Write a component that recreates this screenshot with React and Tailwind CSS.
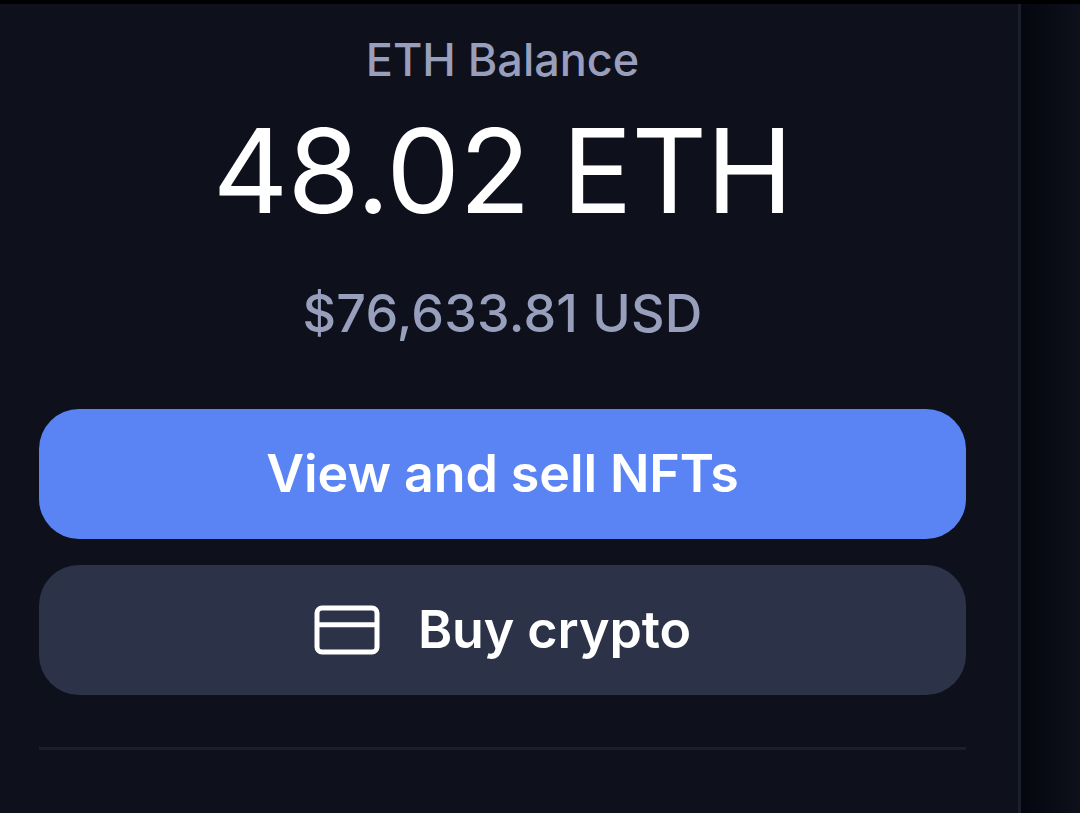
function CardIcon() {
  return (
    <svg width="66" height="50" viewBox="0 0 66 50" fill="none" stroke="white" strokeWidth="5">
      <rect x="3" y="3" width="60" height="44" rx="5" />
      <path d="M3 19.7h60" />
    </svg>
  );
}

export default function App() {
  return (
    <div className="flex h-[813px] w-[1080px] overflow-hidden border-t-4 border-black bg-[#0e111b] font-['Inter',sans-serif]">
      <main className="flex w-[1021px] shrink-0 flex-col items-center border-r-3 border-[#1b1f2b] pl-[39px] pr-[52px]">
        <p className="mt-[28px] text-[45px] leading-[56px] font-medium text-[#989fbd]">ETH Balance</p>
        <h1 className="mt-[13px] text-[117px] leading-[140px] font-normal tracking-[-0.8px] whitespace-nowrap text-white">
          48.02 ETH
        </h1>
        <p className="mt-[41px] text-[52px] leading-[64px] font-medium tracking-[0.2px] text-[#989fbd]">$76,633.81 USD</p>
        <button className="mt-[63px] h-[130px] w-full rounded-[40px] bg-[#5a83f3] text-[52px] font-semibold tracking-[-0.1px] text-white">
          View and sell NFTs
        </button>
        <button className="mt-[26px] flex h-[130px] w-full items-center justify-center gap-[38px] rounded-[40px] bg-[#2c3247] text-[52px] font-semibold tracking-[-0.1px] text-white">
          <CardIcon />
          <span>Buy crypto</span>
        </button>
        <hr className="mt-[52px] w-full border-t-3 border-[#1b1f2b]" />
      </main>
      <div className="flex-1 bg-linear-to-r from-[#05070f] to-[#0e111b]" />
    </div>
  );
}
